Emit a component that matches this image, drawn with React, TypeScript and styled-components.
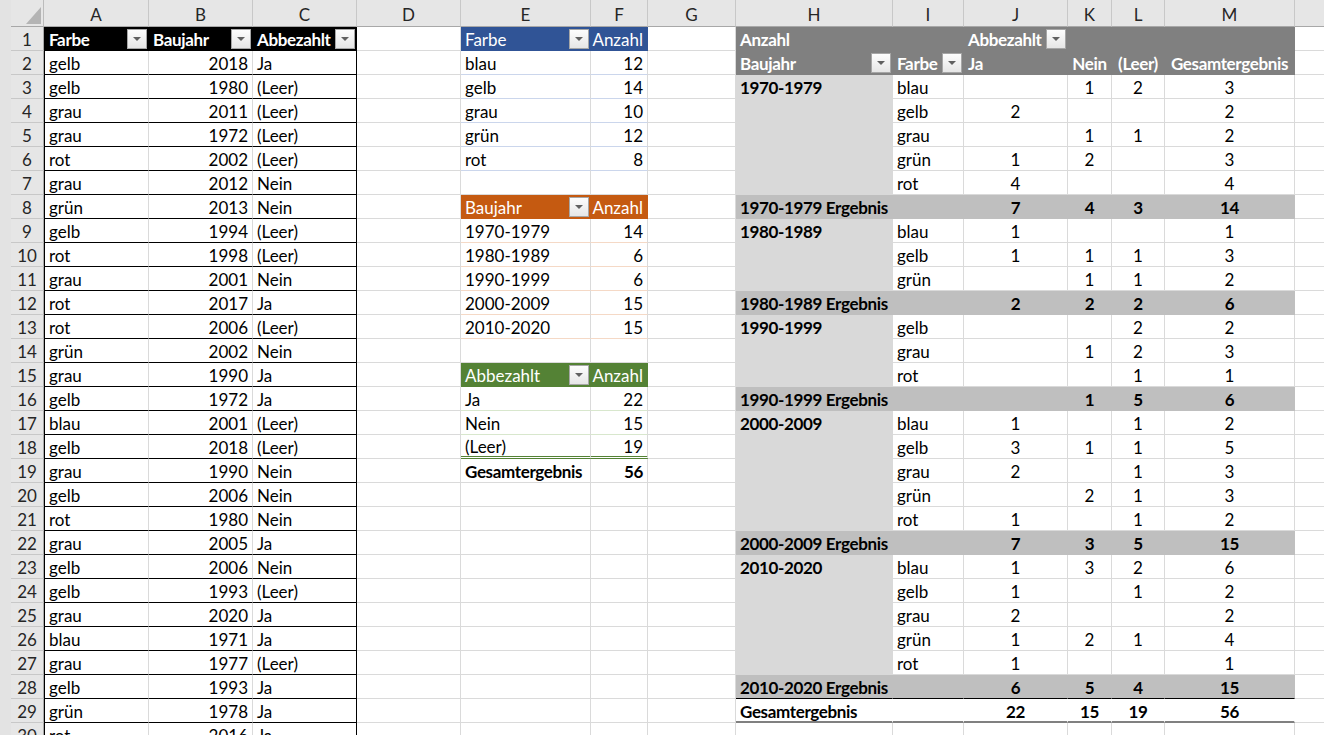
import React from 'react';
import styled, { createGlobalStyle } from 'styled-components';

const GRID = '#dadada';
const FONT = 'Lato, "Liberation Sans", sans-serif';

type Align = 'left' | 'right' | 'center';

type Spec = {
  t?: string | number;
  bold?: boolean;
  align?: Align;
  bg?: string;
  fg?: string;
  left?: string;
  right?: string;
  bottom?: string;
  filter?: boolean;
};

const COLS = [
  { id: 'A', w: 105 },
  { id: 'B', w: 104 },
  { id: 'C', w: 104 },
  { id: 'D', w: 104 },
  { id: 'E', w: 130 },
  { id: 'F', w: 57 },
  { id: 'G', w: 88 },
  { id: 'H', w: 157 },
  { id: 'I', w: 71 },
  { id: 'J', w: 104 },
  { id: 'K', w: 44 },
  { id: 'L', w: 53 },
  { id: 'M', w: 130 },
  { id: '', w: 130 },
];

const GlobalStyle = createGlobalStyle`
  html, body {
    margin: 0;
    padding: 0;
    background: #fff;
    overflow: hidden;
  }
  body {
    font-family: ${FONT};
    font-size: 17px;
    color: #000;
  }
`;

const Window = styled.div`
  display: flex;
  width: 1324px;
  height: 735px;
  overflow: hidden;
`;

const Gutter = styled.div`
  flex: 0 0 11px;
  background: #e3e3e3;
`;

const Sheet = styled.div`
  flex: none;
  display: grid;
  grid-template-columns: 33px ${COLS.map((c) => `${c.w}px`).join(' ')};
  grid-template-rows: 27px repeat(30, 24px);
`;

const Corner = styled.div`
  box-sizing: border-box;
  display: flex;
  align-items: flex-end;
  justify-content: flex-end;
  padding: 0 2px 2px 0;
  background: #e6e6e6;
  border-right: 1px solid #bcbcbc;
  border-bottom: 1px solid #a8a8a8;
`;

const CornerMark = styled.span`
  width: 15px;
  height: 17px;
  background: #b4b4b4;
  clip-path: polygon(100% 0, 100% 100%, 0 100%);
`;

const ColHead = styled.div`
  box-sizing: border-box;
  display: flex;
  align-items: center;
  justify-content: center;
  padding-top: 3px;
  background: #e6e6e6;
  border-right: 1px solid #c8c8c8;
  border-bottom: 1px solid #a8a8a8;
  color: #262626;
  font-size: 17px;
`;

const RowHead = styled.div`
  box-sizing: border-box;
  display: flex;
  align-items: center;
  justify-content: center;
  padding-top: 2px;
  background: #e6e6e6;
  border-right: 1px solid #a8a8a8;
  border-bottom: 1px solid #c8c8c8;
  color: #262626;
  font-size: 17px;
`;

const justify = { left: 'flex-start', right: 'flex-end', center: 'center' };

const Cell = styled.div<{
  $bg?: string;
  $fg?: string;
  $bold?: boolean;
  $align?: Align;
  $left?: string;
  $right?: string;
  $bottom?: string;
}>`
  box-sizing: border-box;
  display: flex;
  align-items: center;
  justify-content: ${(p) => justify[p.$align ?? 'left']};
  padding: 2px 4px 0 4px;
  background: ${(p) => p.$bg ?? '#fff'};
  color: ${(p) => p.$fg ?? '#000'};
  font-weight: ${(p) => (p.$bold ? 700 : 400)};
  letter-spacing: ${(p) => (p.$bold ? '-0.35px' : '0')};
  border-left: ${(p) => (p.$left ? `1px solid ${p.$left}` : 'none')};
  border-right: 1px solid ${(p) => p.$right ?? p.$bg ?? GRID};
  border-bottom: ${(p) => p.$bottom ?? `1px solid ${p.$bg ?? GRID}`};
  white-space: nowrap;
  min-width: 0;
`;

const FilterButton = styled.span`
  box-sizing: border-box;
  flex: 0 0 auto;
  width: 20px;
  height: 20px;
  margin: -2px -3px 0 auto;
  border: 1px solid #a6a6a6;
  background: linear-gradient(#fdfdfd, #e6e6e6);
  display: flex;
  align-items: center;
  justify-content: center;

  &::after {
    content: '';
    border-left: 4px solid transparent;
    border-right: 4px solid transparent;
    border-top: 4px solid #606060;
  }
`;

const Label = styled.span<{ $gap?: boolean }>`
  margin-right: ${(p) => (p.$gap ? '3px' : '0')};
`;

// --- data ---------------------------------------------------------------

const cars: [string, number, string][] = [
  ['gelb', 2018, 'Ja'],
  ['gelb', 1980, '(Leer)'],
  ['grau', 2011, '(Leer)'],
  ['grau', 1972, '(Leer)'],
  ['rot', 2002, '(Leer)'],
  ['grau', 2012, 'Nein'],
  ['grün', 2013, 'Nein'],
  ['gelb', 1994, '(Leer)'],
  ['rot', 1998, '(Leer)'],
  ['grau', 2001, 'Nein'],
  ['rot', 2017, 'Ja'],
  ['rot', 2006, '(Leer)'],
  ['grün', 2002, 'Nein'],
  ['grau', 1990, 'Ja'],
  ['gelb', 1972, 'Ja'],
  ['blau', 2001, '(Leer)'],
  ['gelb', 2018, '(Leer)'],
  ['grau', 1990, 'Nein'],
  ['gelb', 2006, 'Nein'],
  ['rot', 1980, 'Nein'],
  ['grau', 2005, 'Ja'],
  ['gelb', 2006, 'Nein'],
  ['gelb', 1993, '(Leer)'],
  ['grau', 2020, 'Ja'],
  ['blau', 1971, 'Ja'],
  ['grau', 1977, '(Leer)'],
  ['gelb', 1993, 'Ja'],
  ['grün', 1978, 'Ja'],
  ['rot', 2016, 'Ja'],
];

const summaries = [
  {
    start: 1,
    color: '#305496',
    line: '#cbd6ec',
    head: 'Farbe',
    rows: [['blau', 12], ['gelb', 14], ['grau', 10], ['grün', 12], ['rot', 8]],
    total: undefined as number | undefined,
  },
  {
    start: 8,
    color: '#c55a11',
    line: '#f5d9c6',
    head: 'Baujahr',
    rows: [['1970-1979', 14], ['1980-1989', 6], ['1990-1999', 6], ['2000-2009', 15], ['2010-2020', 15]],
    total: undefined,
  },
  {
    start: 15,
    color: '#548235',
    line: '#d8e7cd',
    head: 'Abbezahlt',
    rows: [['Ja', 22], ['Nein', 15], ['(Leer)', 19]],
    total: 56,
  },
];

type Val = number | '';

const groups: { label: string; rows: [string, Val, Val, Val, Val][]; total: Val[] }[] = [
  {
    label: '1970-1979',
    rows: [
      ['blau', '', 1, 2, 3],
      ['gelb', 2, '', '', 2],
      ['grau', '', 1, 1, 2],
      ['grün', 1, 2, '', 3],
      ['rot', 4, '', '', 4],
    ],
    total: [7, 4, 3, 14],
  },
  {
    label: '1980-1989',
    rows: [
      ['blau', 1, '', '', 1],
      ['gelb', 1, 1, 1, 3],
      ['grün', '', 1, 1, 2],
    ],
    total: [2, 2, 2, 6],
  },
  {
    label: '1990-1999',
    rows: [
      ['gelb', '', '', 2, 2],
      ['grau', '', 1, 2, 3],
      ['rot', '', '', 1, 1],
    ],
    total: ['', 1, 5, 6],
  },
  {
    label: '2000-2009',
    rows: [
      ['blau', 1, '', 1, 2],
      ['gelb', 3, 1, 1, 5],
      ['grau', 2, '', 1, 3],
      ['grün', '', 2, 1, 3],
      ['rot', 1, '', 1, 2],
    ],
    total: [7, 3, 5, 15],
  },
  {
    label: '2010-2020',
    rows: [
      ['blau', 1, 3, 2, 6],
      ['gelb', 1, '', 1, 2],
      ['grau', 2, '', '', 2],
      ['grün', 1, 2, 1, 4],
      ['rot', 1, '', '', 1],
    ],
    total: [6, 5, 4, 15],
  },
];

// --- cell builders ------------------------------------------------------

const carCells = (r: number): Spec[] => {
  const edge = '1px solid #000';
  if (r === 1) {
    const head = { bg: '#000', fg: '#fff', bold: true, filter: true, bottom: edge };
    return [
      { ...head, t: 'Farbe', left: '#000' },
      { ...head, t: 'Baujahr' },
      { ...head, t: 'Abbezahlt', right: '#000' },
    ];
  }
  const [farbe, jahr, bez] = cars[r - 2];
  return [
    { t: farbe, left: '#000', bottom: edge },
    { t: jahr, align: 'right', bottom: edge },
    { t: bez, right: '#000', bottom: edge },
  ];
};

const summaryCells = (r: number): Spec[] => {
  for (const b of summaries) {
    if (r === b.start) {
      return [
        { t: b.head, bg: b.color, fg: '#fff', filter: true },
        { t: 'Anzahl', bg: b.color, fg: '#fff', align: 'right' },
      ];
    }
    const i = r - b.start - 1;
    if (i >= 0 && i < b.rows.length) {
      const last = i === b.rows.length - 1;
      const bottom = b.total && last ? `3px double ${b.color}` : `1px solid ${b.line}`;
      return [
        { t: b.rows[i][0], bottom },
        { t: b.rows[i][1], align: 'right', bottom },
      ];
    }
    if (b.total && i === b.rows.length) {
      return [
        { t: 'Gesamtergebnis', bold: true },
        { t: b.total, bold: true, align: 'right' },
      ];
    }
  }
  return [{}, {}];
};

const HEAD = '#808080';
const GROUP = '#d9d9d9';
const SUB = '#bfbfbf';

const pivotRows: Spec[][] = (() => {
  const h = { bg: HEAD, fg: '#fff', bold: true };
  const out: Spec[][] = [
    [{ ...h, t: 'Anzahl' }, h, { ...h, t: 'Abbezahlt', filter: true }, h, h, h],
    [
      { ...h, t: 'Baujahr', filter: true },
      { ...h, t: 'Farbe', filter: true },
      { ...h, t: 'Ja' },
      { ...h, t: 'Nein', align: 'center' },
      { ...h, t: '(Leer)', align: 'center' },
      { ...h, t: 'Gesamtergebnis', align: 'center' },
    ],
  ];
  groups.forEach((g, gi) => {
    g.rows.forEach(([farbe, ...vals], ri) => {
      out.push([
        { t: ri === 0 ? g.label : '', bold: true, bg: GROUP },
        { t: farbe },
        ...vals.map((v): Spec => ({ t: v, align: 'center' })),
      ]);
    });
    const bottom = gi === groups.length - 1 ? '1px solid #000' : undefined;
    const s = { bg: SUB, bold: true, bottom };
    out.push([
      { ...s, t: `${g.label} Ergebnis` },
      s,
      ...g.total.map((v): Spec => ({ ...s, t: v, align: 'center' })),
    ]);
  });
  const tot = { bg: '#fff', bold: true, bottom: `2px solid ${HEAD}` };
  out.push([
    { ...tot, t: 'Gesamtergebnis' },
    tot,
    ...[22, 15, 19, 56].map((v): Spec => ({ ...tot, t: v, align: 'center' })),
  ]);
  return out;
})();

const buildRow = (r: number): Spec[] => {
  const pivot = pivotRows[r - 1] ?? [{}, {}, {}, {}, {}, {}];
  return [...carCells(r), {}, ...summaryCells(r), {}, ...pivot, {}];
};

const SheetCell = ({ spec }: { spec: Spec }) => (
  <Cell
    $bg={spec.bg}
    $fg={spec.fg}
    $bold={spec.bold}
    $align={spec.align}
    $left={spec.left}
    $right={spec.right}
    $bottom={spec.bottom}
  >
    {spec.t !== undefined && spec.t !== '' && <Label $gap={spec.filter}>{spec.t}</Label>}
    {spec.filter && <FilterButton />}
  </Cell>
);

const rowNumbers = Array.from({ length: 30 }, (_, i) => i + 1);

const App = () => (
  <>
    <GlobalStyle />
    <Window>
      <Gutter />
      <Sheet>
        <Corner>
          <CornerMark />
        </Corner>
        {COLS.map((c, i) => (
          <ColHead key={i}>{c.id}</ColHead>
        ))}
        {rowNumbers.map((r) => (
          <React.Fragment key={r}>
            <RowHead>{r}</RowHead>
            {buildRow(r).map((s, j) => (
              <SheetCell key={j} spec={s} />
            ))}
          </React.Fragment>
        ))}
      </Sheet>
    </Window>
  </>
);

export default App;
